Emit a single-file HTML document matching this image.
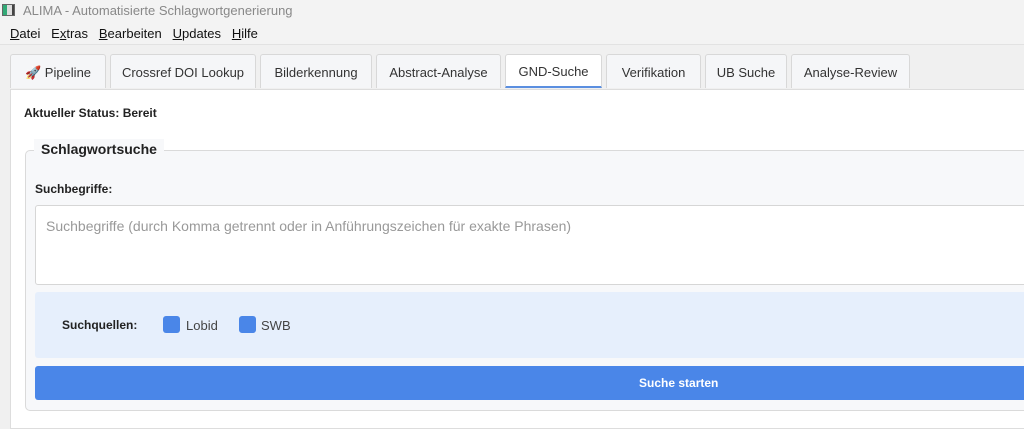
<!DOCTYPE html>
<html><head><meta charset="utf-8"><style>
body{margin:0;width:1024px;height:418px;overflow:hidden;background:#f0f0f0;font-family:"Liberation Sans",sans-serif;position:relative;color:#222}
.a{position:absolute}
.tab{position:absolute;top:54px;height:34px;background:#f5f6f8;border:1px solid #d8d8d8;border-bottom:none;border-radius:3px 3px 0 0;font-size:13px;color:#333;text-align:center;line-height:36px;box-sizing:border-box}
</style></head><body>
<div class="a" style="left:0;top:0;width:1024px;height:22px;background:#f3f3f3"></div>
<div class="a" style="left:2px;top:4px;width:13px;height:12px;border:1px solid #666;background:linear-gradient(90deg,#3a7 0 35%,#ddd 35% 80%,#444 80%);box-sizing:border-box"></div>
<div class="a" style="left:23px;top:3px;font-size:13px;color:#888">ALIMA - Automatisierte Schlagwortgenerierung</div>
<div class="a" style="left:0;top:22px;width:1024px;height:22px;background:#f3f3f3;border-bottom:1px solid #e2e2e2"></div>
<div class="a" style="left:10px;top:26px;font-size:13px;color:#111;word-spacing:0"><u>D</u>atei&nbsp;&nbsp;&nbsp;E<u>x</u>tras&nbsp;&nbsp;&nbsp;<u>B</u>earbeiten&nbsp;&nbsp;&nbsp;<u>U</u>pdates&nbsp;&nbsp;&nbsp;<u>H</u>ilfe</div>
<div class="tab" style="left:10px;width:96px"><span style="color:#e04080">🚀</span> Pipeline</div>
<div class="tab" style="left:110px;width:146px">Crossref DOI Lookup</div>
<div class="tab" style="left:260px;width:112px">Bilderkennung</div>
<div class="tab" style="left:376px;width:125px">Abstract-Analyse</div>
<div class="tab" style="left:505px;width:97px;background:#fff;line-height:34px;border-bottom:2px solid #5b8fe0">GND-Suche</div>
<div class="tab" style="left:606px;width:95px">Verifikation</div>
<div class="tab" style="left:705px;width:82px">UB Suche</div>
<div class="tab" style="left:791px;width:119px">Analyse-Review</div>
<div class="a" style="left:10px;top:89px;width:1020px;height:340px;background:#fff;border:1px solid #ddd;box-sizing:border-box"></div>
<div class="a" style="left:24px;top:106px;font-size:12px;font-weight:bold">Aktueller Status: Bereit</div>
<div class="a" style="left:25px;top:150px;width:1010px;height:261px;background:#f7f8fa;border:1px solid #dadada;border-radius:5px;box-sizing:border-box"></div>
<div class="a" style="left:34px;top:139px;padding:0 7px;background:#f7f8fa;font-size:14px;font-weight:bold;height:22px;line-height:20px">Schlagwortsuche</div>
<div class="a" style="left:35px;top:182px;font-size:12px;font-weight:bold">Suchbegriffe:</div>
<div class="a" style="left:35px;top:205px;width:1000px;height:80px;background:#fff;border:1px solid #d6d6d6;border-radius:3px;box-sizing:border-box"></div>
<div class="a" style="left:46px;top:218px;font-size:14px;color:#999">Suchbegriffe (durch Komma getrennt oder in Anführungszeichen für exakte Phrasen)</div>
<div class="a" style="left:35px;top:292px;width:1000px;height:66px;background:#e6effc;border-radius:3px"></div>
<div class="a" style="left:62px;top:318px;font-size:12px;font-weight:bold">Suchquellen:</div>
<div class="a" style="left:163px;top:316px;width:17px;height:17px;background:#4a86e8;border-radius:3px"></div>
<div class="a" style="left:186px;top:318px;font-size:13px;color:#444">Lobid</div>
<div class="a" style="left:239px;top:316px;width:17px;height:17px;background:#4a86e8;border-radius:3px"></div>
<div class="a" style="left:261px;top:318px;font-size:13px;color:#444">SWB</div>
<div class="a" style="left:35px;top:366px;width:1000px;height:34px;background:#4a86e8;border-radius:3px;color:#fff;font-size:12px;font-weight:bold;line-height:34px;text-indent:604px">Suche starten</div>
</body></html>
